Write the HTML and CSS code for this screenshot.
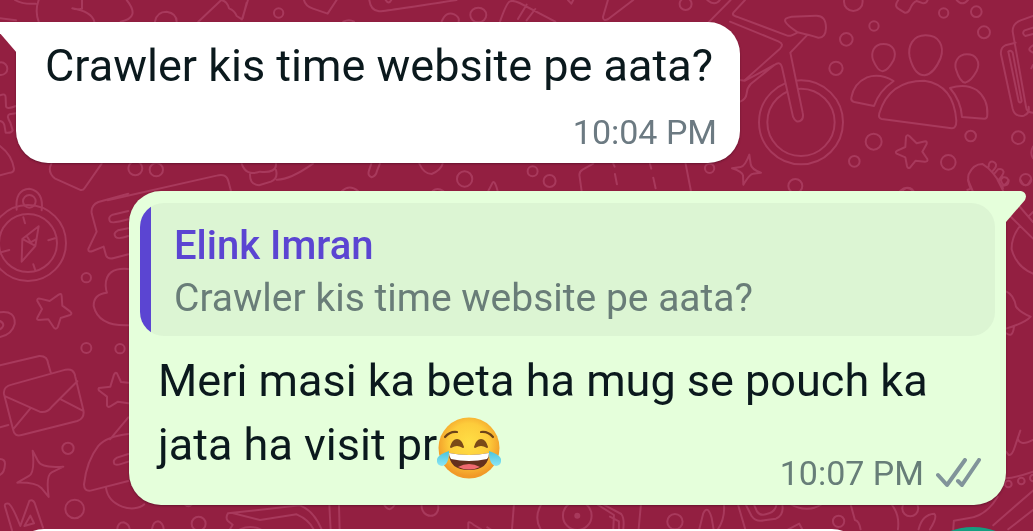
FILE: index.html
```html
<!DOCTYPE html>
<html lang="en">
<head>
  <meta charset="UTF-8" />
  <meta name="viewport" content="width=device-width, initial-scale=1.0" />
  <title>Elink Imran</title>
  <link rel="stylesheet" href="styles.css">
</head>
<body>

  <!-- Wallpaper doodles -->
  <svg class="wallpaper" viewBox="0 0 1033 531" preserveAspectRatio="xMinYMin slice" aria-hidden="true">
    <!-- bicycle and group -->
    <g transform="translate(730 0) scale(.3333)">
      <circle cx="213" cy="367" r="126" />
      <circle cx="213" cy="367" r="101" />
      <path class="fill" d="M133 190Q151 182 156 202L189 350Q198 371 212 362Q222 355 218 338L181 158L230 107L203 97L156 138Z" stroke="none" />
      <path d="M28 240L45 242L133 195Q151 182 156 202L189 350Q198 371 212 362Q222 355 218 338L181 158L230 107M45 0L10 38Q5 46 20 50L172 107Q182 110 203 97Q240 106 265 113Q287 114 288 84Q288 46 258 47L185 50Q161 54 166 65Q171 76 203 97M0 65L145 124Q164 132 150 146L45 240M30 305Q48 298 50 280Q51 264 62 252L133 195" />
      <ellipse cx="370" cy="5" rx="28" ry="28" />
      <circle cx="641" cy="39" r="14" /><circle cx="739" cy="35" r="16" /><circle cx="762" cy="97" r="18" />
      <circle cx="432" cy="78" r="14" /><circle cx="349" cy="118" r="19" /><circle cx="318" cy="205" r="20" />
      <path d="M505 0Q490 20 508 28L524 38Q534 40 540 27Q549 6 560 3L580 10Q590 10 593 0M680 0Q697 20 714 0" />
      <path d="M460 132C431 132 422 158 429 180Q443 214 458 214Q474 212 491 180C501 154 489 132 460 132ZM587 106C548 106 533 139 539 171Q553 226 584 226Q612 222 632 174C644 138 628 106 587 106ZM711 163C682 163 672 189 678 208Q690 247 706 248Q724 243 740 213C753 185 738 163 711 163Z" />
      <path d="M455 357Q444 355 448 340Q477 242 583 242Q672 255 679 362Q679 386 665 385ZM491 243Q450 219 411 232Q371 250 364 293Q362 303 373 306L432 318Q447 273 491 243ZM660 264Q707 249 740 270Q775 297 772 344Q772 356 763 356L696 351Q693 302 660 264Z" />
      <path d="M528 411Q530 403 538 408L560 430L586 424Q592 424 590 432L577 455L592 477Q595 486 584 485L557 482L540 503Q533 507 531 498L526 472L500 461Q494 456 502 452L526 441Z" />
      <circle cx="431" cy="425" r="24" /><circle cx="373" cy="484" r="16" /><circle cx="655" cy="487" r="22" /><circle cx="722" cy="408" r="16" /><circle cx="865" cy="413" r="19" /><circle cx="887" cy="539" r="17" /><circle cx="196" cy="558" r="21" /><circle cx="534" cy="580" r="17" />
      <path d="M58 464L62 492Q64 508 93 518L69 521Q59 522 40 554L39 526Q37 515 6 505L32 501Q45 499 58 464Z" />
      <path d="M712 570L722 566Q711 541 716 523Q730 492 757 492Q790 511 819 565M776 500Q776 483 789 485Q805 492 794 506L786 516M793 521L804 508Q818 504 821 516Q820 525 805 541M808 544L819 532Q833 529 836 544Q834 557 820 557" />
      <path d="M909 48L872 61Q848 70 848 94L888 320Q890 338 909 338M857 128L826 136Q811 143 813 163L848 326Q855 352 882 347Q900 340 896 320M835 155L866 304Q871 311 875 303L848 157Q841 148 835 155M909 83L884 91Q874 100 886 108L909 102M909 136Q887 149 909 158M909 195L904 205M909 440Q899 458 909 475" />
    </g>

    <!-- top left corner and strip under the first message -->
    <g transform="scale(.3333)">
      <path d="M45 0Q68 14 107 11M116 0Q104 34 116 65M246 0V26Q229 30 217 25Q275 35 283 65M380 0Q423 53 362 65M0 55L48 61M465 65Q470 35 500 35Q530 40 530 65M595 65L664 0Q682 4 687 25Q704 31 710 48L726 58L744 0M740 8L728 55M912 0Q916 18 939 26L983 41L1010 0" />
      <circle cx="836" cy="39" r="14" />
      <circle cx="3" cy="206" r="19" />
      <path d="M0 286Q18 278 17 295L18 319Q20 329 48 318M48 340L28 343Q18 348 31 368L38 391Q35 400 17 398L13 375Q10 365 0 363M0 438Q35 464 42 506Q42 517 30 518L0 526" />
      <path d="M154 491Q141 515 164 535L239 569Q248 573 254 564L305 491M323 601L650 527Q679 519 685 543L693 573M725 491Q738 530 780 515Q830 520 828 491M750 522Q749 554 777 556L813 545Q835 535 828 510M830 539Q870 540 939 491" />
      <circle cx="406" cy="505" r="21" /><circle cx="469" cy="509" r="20" />
      <path d="M1114 491L1107 512Q1102 528 1115 532Q1128 528 1131 513L1140 491M1258 491Q1272 522 1295 522Q1323 510 1328 491M1026 573Q1049 552 1074 573M1298 573Q1312 561 1330 573M1465 573L1478 548Q1485 540 1493 573M1780 491L1748 509Q1736 516 1739 530L1745 573M1840 491L1844 500M1845 522L1851 553M1950 491L1954 506M1960 533L1967 565M2057 491L2073 573" />
      <circle cx="1394" cy="537" r="23" /><circle cx="1598" cy="514" r="15" /><circle cx="1649" cy="543" r="18" /><circle cx="2129" cy="505" r="14" />
    </g>

    <!-- top strip -->
    <g transform="scale(.3333)">
      <path d="M1108 0Q1112 31 1137 34Q1152 34 1370 0M1157 0Q1166 15 1174 0M1325 65Q1338 32 1363 43Q1380 52 1376 65M1500 65Q1520 7 1530 4Q1540 0 1559 9L1666 65M1554 57L1580 14M1580 61L1606 27M1704 0L1714 11L1720 0M1824 0L1809 51Q1809 65 1825 57L1900 0M1030 65Q1048 56 1062 65" />
      <ellipse cx="1435" cy="45" rx="24" ry="22" /><circle cx="2057" cy="12" r="18" />
      <path d="M2192 0L2125 68M2122 0Q2145 20 2160 0" />
    </g>

    <!-- left side -->
    <g transform="translate(0 160) scale(.3333)">
      <path d="M50 149Q44 89 88 86Q132 94 125 151" />
      <circle cx="88" cy="124" r="19" /><circle cx="84" cy="249" r="114" /><circle cx="84" cy="249" r="87" />
      <path d="M70 172L75 190M145 241L165 235M100 313L106 331M0 278L28 270M116 199L67 237L65 305L106 258ZM67 237L106 258M82 231L92 247L110 237" />
      <path d="M385 101L295 126Q272 136 275 160L290 215L265 267Q264 278 278 273L311 260L318 286Q324 299 342 294L385 283M385 153L338 164Q323 171 330 184Q336 192 385 178M385 205L354 211Q338 219 347 231Q355 239 385 228" />
      <circle cx="259" cy="353" r="14" /><circle cx="259" cy="564" r="15" /><circle cx="360" cy="566" r="14" /><circle cx="204" cy="865" r="17" /><circle cx="224" cy="1047" r="28" />
      <path d="M385 327Q317 321 317 377Q318 392 321 398Q280 402 281 438Q295 499 385 496" />
      <path d="M176 404Q184 398 185 408L187 437L211 455Q219 462 208 466L182 474L173 502Q168 510 161 502L145 478L116 480Q108 480 113 471L126 447L112 423Q110 414 120 416L149 423Z" />
      <path d="M0 457Q47 451 44 492Q36 524 0 531M0 483Q20 494 0 508M0 616L118 588Q143 587 145 613L152 637M0 802L25 795M35 674L197 629Q222 624 226 651L250 750Q255 775 232 783L65 825Q43 831 39 808L12 702Q9 680 35 674ZM16 709L119 755Q142 759 154 742L232 664M41 806L90 747M184 719L248 752" />
      <path d="M385 668L363 666L351 640Q346 636 342 644L331 680L297 684Q293 689 300 694L321 710L321 736Q323 744 331 739L354 725L385 730" />
      <path d="M385 772L330 838M385 822Q318 830 295 858Q260 903 252 973Q252 995 272 992L385 963M385 882L351 893Q337 901 343 912Q349 919 385 905M318 984C326 1040 401 1061 433 1033" />
      <path d="M98 872L114 903Q123 925 190 920L155 937Q137 946 146 1011L124 984Q108 967 52 968L87 948Q105 938 98 872ZM0 897Q15 898 15 911Q14 938 0 945" />
      <path d="M36 1111L15 1040Q12 1029 26 1031Q37 1037 61 1098L88 1023Q98 1017 104 1029L129 1103M73 1098L91 1067L102 1090Z" />
      <path d="M352 1107Q354 1087 371 1087Q387 1092 389 1107M456 1107Q460 1085 474 1084Q489 1088 491 1107" />
    </g>

    <!-- bottom strip -->
    <g transform="translate(0 490) scale(.3333)">
      <path d="M554 43Q565 54 576 43M684 70Q676 82 683 92L698 104L690 118M684 70L900 46Q941 62 965 118M700 70L780 90L890 73Q927 89 941 118M720 118Q752 104 782 118M988 43L992 118M1017 43L1019 118M1152 43Q1168 72 1185 43M1265 43C1262 90 1324 88 1314 43M1405 118V99Q1407 92 1422 105L1444 118M1462 112L1472 118M1542 43L1536 118" />
      <circle cx="596" cy="101" r="21" />
      <path d="M1624 43Q1601 82 1622 118M1792 43L1842 75L1840 118M1810 43L1864 72Q1874 85 1870 118M1830 80L1857 94V118M1923 43L1916 118M2098 118L2110 70Q2123 43 2135 83L2141 118M2172 43Q2176 85 2154 118M2214 43L2236 118M2237 43L2255 78Q2268 97 2293 91L2328 86Q2353 75 2347 43M2262 43L2271 64Q2281 79 2300 72Q2325 68 2330 43M2373 43Q2423 70 2464 43M2365 118L2398 101L2407 118M2552 43L2565 90Q2578 93 2582 118M2675 43Q2700 75 2694 118M2756 118Q2767 73 2803 71Q2814 80 2790 118" />
      <circle cx="1732" cy="77" r="43" /><circle class="dot" cx="1732" cy="77" r="6" /><circle cx="2025" cy="95" r="23" /><circle cx="2516" cy="94" r="17" /><circle cx="2731" cy="55" r="24" />
      <path d="M2993 20Q2960 78 2904 85L2862 92L2860 118M2980 106L3099 2M3025 118L3099 60" />
    </g>

    <!-- right side -->
    <g transform="translate(900 180) scale(.3333)">
      <path d="M204 0L218 33M293 0L309 32M303 0Q310 28 326 0M362 0Q377 32 392 0M0 33Q22 14 40 33M355 75L399 126M385 110L399 96M330 108L399 176M360 138Q334 171 335 208Q349 260 399 281M318 334Q342 344 348 380Q362 399 392 410Q377 428 318 446M319 460Q338 475 342 440" />
      <path d="M318 815L326 825Q336 828 344 802L361 752M353 775Q360 800 399 780M318 895Q347 893 399 875" />
      <circle cx="325" cy="912" r="10" /><circle cx="364" cy="903" r="10" /><circle cx="400" cy="894" r="10" />
    </g>
  </svg>

  <main class="chat">
    <article class="bubble incoming">
      <svg class="tail" viewBox="0 0 20 32" aria-hidden="true"><path d="M20 0H3Q-3 1 1 9L20 31Z" /></svg>
      <p class="message">Crawler kis time website pe aata?</p>
      <div class="meta"><time datetime="22:04">10:04 PM</time></div>
    </article>

    <article class="bubble outgoing">
      <svg class="tail" viewBox="0 0 20 32" aria-hidden="true"><path d="M0 0H15Q22 2 19 9L0 31Z" /></svg>
      <blockquote class="quote">
        <p class="quote-name">Elink Imran</p>
        <p class="quote-text">Crawler kis time website pe aata?</p>
      </blockquote>
      <p class="message">Meri masi ka beta ha mug se pouch ka jata ha visit pr<svg class="emoji" viewBox="0 0 64 64" role="img" aria-label="face with tears of joy">
          <defs>
            <radialGradient id="face" cx="50%" cy="42%" r="54%">
              <stop offset="0" stop-color="#ffdf45" />
              <stop offset=".6" stop-color="#fdcc3b" />
              <stop offset="1" stop-color="#f19a28" />
            </radialGradient>
            <linearGradient id="tear" x1="0" y1="0" x2="0" y2="1">
              <stop offset="0" stop-color="#4cc3dc" />
              <stop offset="1" stop-color="#8be6f5" />
            </linearGradient>
          </defs>
          <circle cx="32" cy="32" r="30.5" fill="url(#face)" />
          <path d="M8 21Q13 15 20 16M44 16Q51 15 56 21" fill="none" stroke="#6d4318" stroke-width="2.2" stroke-linecap="round" />
          <path d="M14 31Q16 24 20 24Q24 24 26 31Q20 27 14 31ZM38 31Q40 24 44 24Q48 24 50 31Q44 27 38 31Z" fill="#7a4a18" stroke="#7a4a18" stroke-width="2" stroke-linejoin="round" />
          <path d="M12 37Q32 41 52 37Q52 54 32 54Q12 54 12 37Z" fill="#64301d" />
          <path d="M12 37Q32 41 52 37Q52 41 50 43Q32 47 14 43Q12 40 12 37Z" fill="#fff" />
          <path d="M21 51Q32 45 43 51Q32 56 21 51Z" fill="#f06a70" />
          <path d="M12 35Q12 49 5 50Q-1 49 0 43Q2 38 12 35ZM52 35Q52 49 59 50Q65 49 64 43Q62 38 52 35Z" fill="url(#tear)" />
        </svg></p>
      <div class="meta">
        <time datetime="22:07">10:07 PM</time>
        <svg class="ticks" viewBox="0 0 46 30" role="img" aria-label="Delivered">
          <path d="M2 17L11 27L29 2M22 23L26 27L43 2" />
        </svg>
      </div>
    </article>
  </main>

  <form class="composer">
    <input class="composer-input" type="text" aria-label="Message">
    <button class="composer-button" type="button" aria-label="Record voice message"></button>
  </form>

</body>
</html>
```

FILE: styles.css
```css
* {
  box-sizing: border-box;
}
body {
  margin: 0;
  height: 100vh;
  overflow: hidden;
  font-family: Roboto, 'Liberation Sans', sans-serif;
  background-color: #931f41;
  color: #0b191d;
}
p,
blockquote {
  margin: 0;
}

.wallpaper {
  position: fixed;
  top: 0;
  left: 0;
  width: 100%;
  height: 100%;
  z-index: -1;
  fill: none;
  stroke: #a8395c;
  stroke-width: 6;
  stroke-linecap: round;
  stroke-linejoin: round;
}
.wallpaper .fill {
  fill: #931f41;
}
.wallpaper .dot {
  fill: #a8395c;
}

.chat {
  display: flex;
  flex-direction: column;
  gap: 28px;
  padding: 22px 27px 24px 16px;
}
.bubble {
  position: relative;
  border-radius: 32px;
  box-shadow: 0 1px 2px rgba(60, 10, 30, 0.5);
}
.incoming {
  align-self: flex-start;
  padding: 12px 27px 9px 29px;
  background-color: #fff;
  border-top-left-radius: 0;
}
.outgoing {
  align-self: flex-end;
  width: 100%;
  max-width: 877px;
  padding: 12px 11px 10px;
  background-color: #e5ffdb;
  border-top-right-radius: 0;
}

.tail {
  position: absolute;
  top: 0;
  width: 20px;
  height: 32px;
}
.incoming .tail {
  right: 100%;
  margin-right: -1px;
  fill: #fff;
}
.outgoing .tail {
  left: 100%;
  fill: #e5ffdb;
}

.message {
  font-size: 45px;
  line-height: 64px;
}
.outgoing .message {
  padding: 0 18px;
}
.emoji {
  width: 64px;
  height: 64px;
  margin: -4px 0;
  vertical-align: -16px;
}

.meta {
  display: flex;
  justify-content: flex-end;
  align-items: center;
  gap: 12px;
  font-size: 34px;
  line-height: 44px;
  color: #6c7a82;
}
.incoming .meta {
  margin: 12px -4px 0 0;
}
.outgoing .meta {
  margin-top: -26px;
  padding-right: 13px;
  color: #677e78;
}
.ticks {
  width: 46px;
  height: 30px;
  fill: none;
  stroke: #81949a;
  stroke-width: 4;
  stroke-linecap: round;
  stroke-linejoin: round;
}

.quote {
  margin-bottom: 13px;
  padding: 16px 24px 11px 34px;
  border-radius: 24px;
  background: linear-gradient(to right, #5b45d2 11px, #dcf5d3 11px);
  font-size: 39px;
  line-height: 53px;
}
.quote-name {
  font-size: 40px;
  font-weight: 500;
  color: #5b45d2;
}
.quote-text {
  color: #697d78;
}

.composer {
  display: flex;
  gap: 43px;
  margin: 0 -6px 0 12px;
}
.composer-input {
  flex: 1;
  min-width: 0;
  height: 132px;
  border: 0;
  border-radius: 32px;
  padding: 0 48px;
  font-size: 45px;
  background-color: #fff;
}
.composer-button {
  width: 132px;
  height: 132px;
  margin-top: -2px;
  border: 0;
  border-radius: 50%;
  background-color: #159c80;
}
```
